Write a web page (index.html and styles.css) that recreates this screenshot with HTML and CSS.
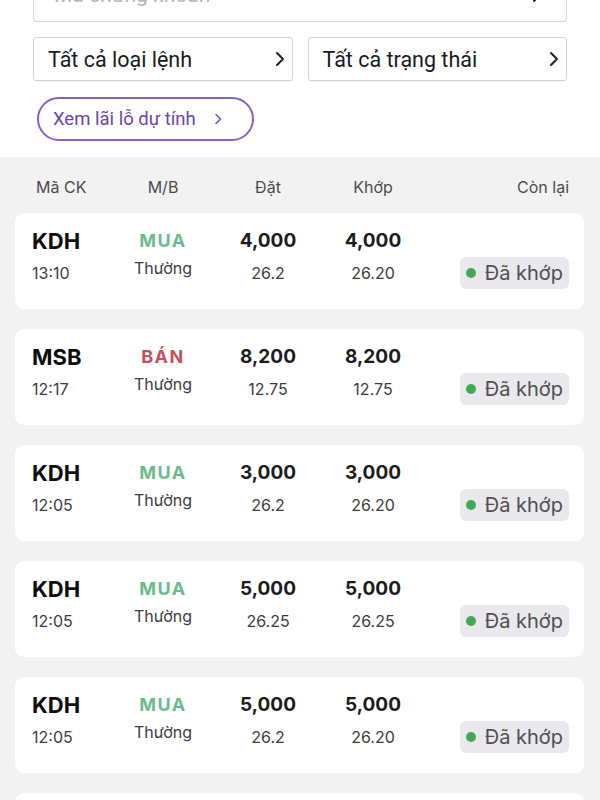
FILE: index.html
```html
<!DOCTYPE html>
<html lang="vi">
<head>
    <meta charset="UTF-8">
    <meta name="viewport" content="width=device-width, initial-scale=1.0">
    <title>Sổ lệnh</title>
    <link rel="stylesheet" href="styles.css">
</head>
<body>
    <div class="filters">
        <div class="search">
            <span class="placeholder">Mã chứng khoán</span>
            <svg class="chevron" width="10" height="16" viewBox="0 0 10 16"><path d="M2 2l6 6-6 6" fill="none" stroke="#222" stroke-width="2" stroke-linecap="round" stroke-linejoin="round"/></svg>
        </div>
        <div class="select-row">
            <div class="select">
                <span>Tất cả loại lệnh</span>
                <svg class="chevron" width="10" height="16" viewBox="0 0 10 16"><path d="M2 2l6 6-6 6" fill="none" stroke="#222" stroke-width="2" stroke-linecap="round" stroke-linejoin="round"/></svg>
            </div>
            <div class="select">
                <span>Tất cả trạng thái</span>
                <svg class="chevron" width="10" height="16" viewBox="0 0 10 16"><path d="M2 2l6 6-6 6" fill="none" stroke="#222" stroke-width="2" stroke-linecap="round" stroke-linejoin="round"/></svg>
            </div>
        </div>
        <div class="pnl-button">
            <span>Xem lãi lỗ dự tính</span>
            <svg width="8" height="12" viewBox="0 0 8 12"><path d="M2 1.5l4.5 4.5-4.5 4.5" fill="none" stroke="#7a52bd" stroke-width="1.6" stroke-linecap="round" stroke-linejoin="round"/></svg>
        </div>
    </div>

    <div class="orders">
        <div class="orders-head">
            <span>Mã CK</span>
            <span class="center">M/B</span>
            <span class="center">Đặt</span>
            <span class="center">Khớp</span>
            <span class="right">Còn lại</span>
        </div>

        <div class="order">
            <div class="cell">
                <span class="symbol">KDH</span>
                <span class="sub">13:10</span>
            </div>
            <div class="cell center side">
                <span class="buy">MUA</span>
                <span class="sub">Thường</span>
            </div>
            <div class="cell center">
                <span class="qty">4,000</span>
                <span class="sub">26.2</span>
            </div>
            <div class="cell center">
                <span class="qty">4,000</span>
                <span class="sub">26.20</span>
            </div>
            <div class="cell right">
                <span class="status"><i class="dot"></i>Đã khớp</span>
            </div>
        </div>

        <div class="order">
            <div class="cell">
                <span class="symbol">MSB</span>
                <span class="sub">12:17</span>
            </div>
            <div class="cell center side">
                <span class="sell">BÁN</span>
                <span class="sub">Thường</span>
            </div>
            <div class="cell center">
                <span class="qty">8,200</span>
                <span class="sub">12.75</span>
            </div>
            <div class="cell center">
                <span class="qty">8,200</span>
                <span class="sub">12.75</span>
            </div>
            <div class="cell right">
                <span class="status"><i class="dot"></i>Đã khớp</span>
            </div>
        </div>

        <div class="order">
            <div class="cell">
                <span class="symbol">KDH</span>
                <span class="sub">12:05</span>
            </div>
            <div class="cell center side">
                <span class="buy">MUA</span>
                <span class="sub">Thường</span>
            </div>
            <div class="cell center">
                <span class="qty">3,000</span>
                <span class="sub">26.2</span>
            </div>
            <div class="cell center">
                <span class="qty">3,000</span>
                <span class="sub">26.20</span>
            </div>
            <div class="cell right">
                <span class="status"><i class="dot"></i>Đã khớp</span>
            </div>
        </div>

        <div class="order">
            <div class="cell">
                <span class="symbol">KDH</span>
                <span class="sub">12:05</span>
            </div>
            <div class="cell center side">
                <span class="buy">MUA</span>
                <span class="sub">Thường</span>
            </div>
            <div class="cell center">
                <span class="qty">5,000</span>
                <span class="sub">26.25</span>
            </div>
            <div class="cell center">
                <span class="qty">5,000</span>
                <span class="sub">26.25</span>
            </div>
            <div class="cell right">
                <span class="status"><i class="dot"></i>Đã khớp</span>
            </div>
        </div>

        <div class="order">
            <div class="cell">
                <span class="symbol">KDH</span>
                <span class="sub">12:05</span>
            </div>
            <div class="cell center side">
                <span class="buy">MUA</span>
                <span class="sub">Thường</span>
            </div>
            <div class="cell center">
                <span class="qty">5,000</span>
                <span class="sub">26.2</span>
            </div>
            <div class="cell center">
                <span class="qty">5,000</span>
                <span class="sub">26.20</span>
            </div>
            <div class="cell right">
                <span class="status"><i class="dot"></i>Đã khớp</span>
            </div>
        </div>

        <!-- next row starts below the fold -->
        <div class="order"></div>
    </div>
</body>
</html>
```

FILE: styles.css
```css
body {
    margin: 0;
    background-color: #ffffff;
    font-family: Inter, "Noto Sans", sans-serif;
    color: #111;
    height: 800px;
    overflow: hidden;
}

/* Filters */
.filters {
    padding: 0 33px 16px 33px;
    display: flex;
    flex-direction: column;
    gap: 15px;
    font-family: Roboto, "Liberation Sans", sans-serif;
}
.search {
    height: 45px;
    margin-top: -23px;
    box-sizing: border-box;
    border: 1px solid #d6d6d6;
    border-top: none;
    border-radius: 0 0 4px 4px;
    display: flex;
    justify-content: space-between;
    align-items: center;
    padding: 0 24px 8px 20px;
    font-size: 21px;
    color: #b4b4b4;
}
.select-row {
    display: flex;
    gap: 15px;
}
.select {
    flex: 1;
    height: 44px;
    box-sizing: border-box;
    border: 1px solid #d3d3d3;
    border-radius: 3px;
    box-shadow: 0 1px 1px rgba(0, 0, 0, 0.05);
    display: flex;
    justify-content: space-between;
    align-items: center;
    padding: 0 7px 0 14px;
    font-size: 21.5px;
    color: #1a1a1a;
}
.pnl-button {
    width: 217px;
    height: 44px;
    margin-left: 4px;
    margin-top: 1px;
    box-sizing: border-box;
    border: 2px solid #8660c4;
    border-radius: 22px;
    display: flex;
    align-items: center;
    gap: 18px;
    padding: 0 14px;
    font-size: 18.5px;
    color: #6c44ad;
}

/* Orders list */
.orders {
    background-color: #f2f2f3;
    padding: 20px 16px 0 15px;
    display: flex;
    flex-direction: column;
    gap: 20px;
    min-height: 700px;
}
.orders-head,
.order {
    display: grid;
    grid-template-columns: 81px 100px 110px 100px 1fr;
}
.orders-head {
    grid-template-columns: 77px 100px 110px 100px 1fr;
    padding: 0 15px 0 21px;
    font-size: 16px;
    line-height: 20px;
    color: #4c4c4c;
    margin-bottom: -4px;
}
.order {
    height: 96px;
    flex-shrink: 0;
    box-sizing: border-box;
    background-color: #ffffff;
    border-radius: 9px;
    padding: 16px 15px 0 17px;
}
.cell {
    display: flex;
    flex-direction: column;
    gap: 9px;
}
.center {
    text-align: center;
    align-items: center;
}
.right {
    text-align: right;
    align-items: flex-end;
}
.cell.side {
    gap: 4px;
}
.symbol {
    font-size: 22px;
    line-height: 24px;
    font-weight: 700;
    color: #0d0d0d;
}
.qty {
    font-size: 19px;
    line-height: 24px;
    font-weight: 700;
    color: #1c1c1c;
}
.buy,
.sell {
    font-size: 18px;
    line-height: 24px;
    font-weight: 700;
    letter-spacing: 1.5px;
}
.buy {
    color: #6bbb8d;
}
.sell {
    color: #c2515c;
}
.sub {
    font-size: 16px;
    line-height: 22px;
    color: #3c3c3c;
}
.status {
    margin-top: 28px;
    height: 32px;
    box-sizing: border-box;
    background-color: #e8e8ed;
    border-radius: 6px;
    display: flex;
    align-items: center;
    gap: 9px;
    padding: 0 6px 0 6px;
    font-size: 20px;
    color: #4f4f4f;
}
.dot {
    width: 10px;
    height: 10px;
    border-radius: 50%;
    background-color: #45a857;
}
```
